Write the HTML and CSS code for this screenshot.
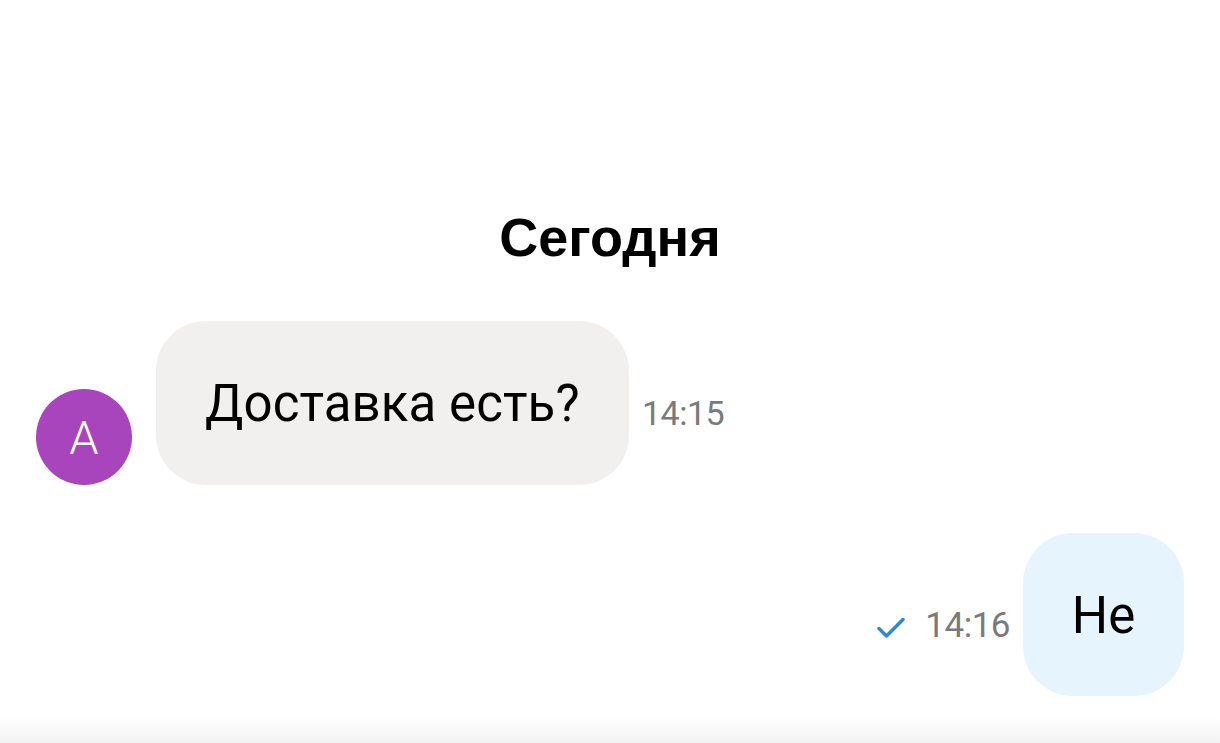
FILE: index.html
```html
<!DOCTYPE html>
<html lang="ru">
<head>
<meta charset="utf-8">
<link rel="stylesheet" href="styles.css">
</head>
<body>
<div class="chat">
  <div class="date">Сегодня</div>
  <div class="row incoming">
    <div class="avatar">A</div>
    <div class="bubble gray">Доставка есть?</div>
    <div class="time">14:15</div>
  </div>
  <div class="row outgoing">
    <div class="meta">
      <svg class="check" width="28" height="22" viewBox="0 0 28 22"><path d="M2 11.5 L9.5 19 L26 2.5" fill="none" stroke="#2a8ad8" stroke-width="3.4" stroke-linecap="round" stroke-linejoin="round"/></svg>
      <span class="time">14:16</span>
    </div>
    <div class="bubble blue">Не</div>
  </div>
</div>
<div class="footer"></div>
</body>
</html>
```
FILE: styles.css
```css
* { box-sizing: border-box; }
html, body { margin: 0; padding: 0; }
body {
  width: 1220px;
  height: 743px;
  overflow: hidden;
  background: #fff;
  font-family: Roboto, "Noto Sans", sans-serif;
  color: #000;
  position: relative;
}
.chat {
  display: flex;
  flex-direction: column;
  padding-top: 205px;
}
.date {
  text-align: center;
  font-family: "Liberation Sans", Arial, sans-serif;
  font-weight: 700;
  font-size: 54px;
  line-height: 64px;
  height: 64px;
  margin-bottom: 52px;
}
.row {
  display: flex;
  align-items: flex-end;
}
.incoming {
  padding-left: 36px;
  gap: 24px;
}
.avatar {
  width: 96px;
  height: 96px;
  border-radius: 50%;
  background: #a844bc;
  color: #fff;
  font-size: 47px;
  font-weight: 300;
  display: flex;
  align-items: center;
  justify-content: center;
  flex: none;
}
.bubble {
  height: 164px;
  border-radius: 50px;
  display: flex;
  align-items: center;
  font-size: 51px;
}
.gray {
  background: #f1f0ef;
  padding: 0 49px;
  width: 473px;
  letter-spacing: 0.1px;
}
.blue {
  background: #e5f4fd;
  width: 161px;
  height: 163px;
  justify-content: center;
  padding-top: 2px;
}
.time {
  color: #7a7a7a;
  font-size: 34px;
  letter-spacing: -0.5px;
}
.incoming .time {
  align-self: center;
  margin-left: -11px;
  margin-top: 20px;
}
.outgoing {
  margin-top: 48px;
  justify-content: flex-end;
  padding-right: 36px;
  align-items: center;
  gap: 13px;
}
.outgoing .time { font-size: 35px; }
.meta {
  display: flex;
  align-items: center;
  gap: 20px;
  margin-top: 22px;
}
.check { display: block; margin-top: 4px; }
.footer {
  position: absolute;
  left: 0; right: 0; bottom: 0;
  height: 26px;
  background: linear-gradient(#ffffff, #f2f2f2);
}
```
